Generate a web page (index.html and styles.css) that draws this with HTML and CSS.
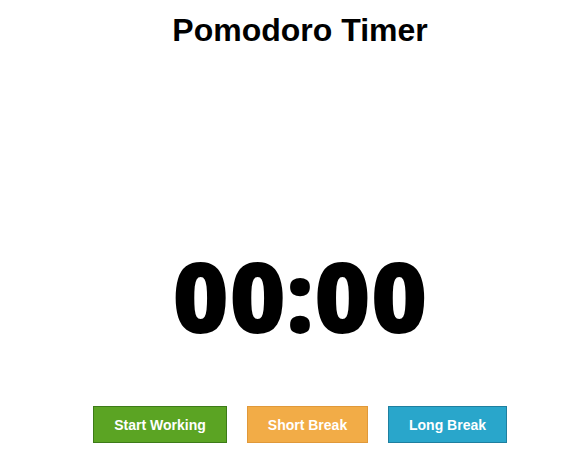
FILE: index.html
```html
<!DOCTYPE html>
<html>
<head>
<meta charset="utf-8">
<link rel="stylesheet" href="styles.css">
</head>
<body>
<div class="app">
  <h1 class="title">Pomodoro Timer</h1>
  <div class="timer">00:00</div>
  <div class="controls">
    <button class="btn btn-work">Start Working</button>
    <button class="btn btn-short">Short Break</button>
    <button class="btn btn-long">Long Break</button>
  </div>
</div>
</body>
</html>
```

FILE: styles.css
```css
html, body {
  margin: 0;
  padding: 0;
  background: #ffffff;
}
.app {
  padding-left: 13px;
  display: flex;
  flex-direction: column;
  align-items: center;
  font-family: "Liberation Sans", Arial, sans-serif;
}
.title {
  margin: 12px 0 0 0;
  font-size: 32px;
  font-weight: 700;
  color: #000;
  line-height: 37px;
}
.timer {
  margin-top: 186px;
  font-family: "Open Sans", sans-serif;
  font-weight: 800;
  font-size: 97px;
  line-height: 120px;
  color: #000;
}
.controls {
  margin-top: 51px;
  display: flex;
  gap: 20px;
}
.btn {
  height: 37px;
  border: 1px solid;
  color: #fff;
  font-family: "Liberation Sans", Arial, sans-serif;
  font-weight: 700;
  font-size: 14px;
  padding: 0;
}
.btn-work {
  width: 134px;
  background: #5ba423;
  border-color: #3d7b18;
}
.btn-short {
  width: 121px;
  background: #f2ac47;
  border-color: #e0993a;
}
.btn-long {
  width: 119px;
  background: #29a6cb;
  border-color: #1f7f9f;
}
```
